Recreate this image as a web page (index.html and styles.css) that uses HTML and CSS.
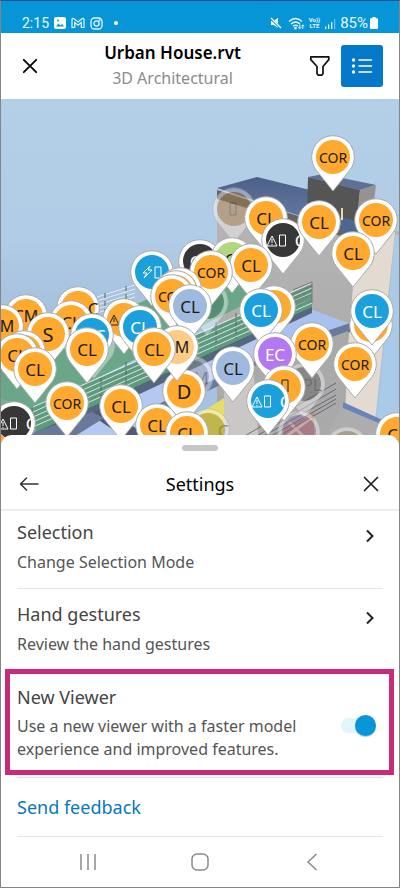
FILE: index.html
```
<!DOCTYPE html>
<html lang="en">
<head>
<meta charset="utf-8">
<meta name="viewport" content="width=device-width, initial-scale=1">
<title>Urban House.rvt</title>
<link rel="stylesheet" href="styles.css">
</head>
<body>
<div class="phone">
  <div class="status">
    <div class="status-group">
      <span class="clock">2:15</span>
      <svg width="12" height="12" viewBox="0 0 12 12"><rect width="12" height="12" rx="2" fill="#fff"/><path d="M2 9.500l2.500-3 2 2L8 7l2.200 2.500z" fill="#0696d7"/><circle cx="4" cy="3.500" r="1" fill="#0696d7"/></svg>
      <svg width="14" height="12" viewBox="0 0 14 12" fill="none" stroke="#e5f5fc" stroke-width="1.200"><path d="M1 10.500V2.200Q1.500.8 3 1.800L7 5l4-3.200q1.500-1 2 .4v8.300h-2.700V5.600L7 8.200 3.700 5.600v4.900z"/></svg>
      <svg width="13" height="13" viewBox="0 0 13 13" fill="none" stroke="#e5f5fc" stroke-width="1.300"><rect x="1" y="1" width="11" height="11" rx="3.500"/><circle cx="6.500" cy="6.500" r="2.600"/><circle cx="9.600" cy="3.400" r=".4"/></svg>
      <span class="dot"></span>
    </div>
    <div class="status-group status-right">
      <svg width="12" height="12" viewBox="0 0 12 12"><path d="M1 4h2.500L8 .8v10L3.500 8H1z" fill="#fff"/><path d="M.5 1l10.500 10.500" stroke="#0696d7" stroke-width="2.400"/><path d="M1 1l10 10" stroke="#fff" stroke-width="1.200"/></svg>
      <svg class="wifi" width="17" height="13" viewBox="0 0 17 13" fill="none" stroke="#e5f5fc" stroke-width="1.300"><path d="M1 4.500q6.500-6 13 0M3 7q4.500-4 9 0M5 9.300q2.500-2.200 5 0"/><circle cx="7.500" cy="11.200" r=".7"/><path d="M11.800 7.500v4m-1.300-1.300 1.300 1.500 1.300-1.500M14.800 12V8m-1.300 1.300 1.300-1.500 1.300 1.500" stroke-width="1"/></svg>
      <span class="volte">Vo))<br>LTE</span>
      <svg width="12" height="11" viewBox="0 0 12 11" fill="#e5f5fc"><path d="M1 8.500h1.300V11H1zM4 6.500h1.300V11H4zM7 4h1.300v7H7z"/><path d="M10 1h1.300v10H10z" opacity=".45"/></svg>
      <span class="battery">85%</span>
      <svg width="8" height="12" viewBox="0 0 8 12"><path d="M2.500 0h3v1.200H7q1 0 1 1V11q0 1-1 1H1q-1 0-1-1V2.200q0-1 1-1h1.500z" fill="#fff"/></svg>
    </div>
  </div>

  <header class="appbar">
    <button class="icon-btn" aria-label="Close"><svg width="16" height="16" viewBox="0 0 16 16" fill="none" stroke="#000" stroke-width="1.800" stroke-linecap="round"><path d="M1.800 1.800l12.400 12.400M14.200 1.800L1.800 14.200"/></svg></button>
    <div class="titles">
      <h1>Urban House.rvt</h1>
      <p>3D Architectural</p>
    </div>
    <div class="actions">
      <button class="filter" aria-label="Filter"><svg width="22" height="22" viewBox="0 0 22 22" fill="none" stroke="#111" stroke-width="1.700" stroke-linejoin="round"><path d="M1.800 1.800h18v2.800L14 11.500v7.200l-1.300 1.500H9.300L8 18.700v-7.200L1.800 4.600z"/></svg></button>
      <button class="list" aria-label="List"><svg width="22" height="18" viewBox="0 0 22 18" stroke="#fff" stroke-width="1.500" stroke-linecap="round"><path d="M8 3h12.500M8 9h12.500M8 15h12.500"/><g fill="#fff" stroke="none"><circle cx="2.500" cy="3" r="1.700"/><circle cx="2.500" cy="9" r="1.700"/><circle cx="2.500" cy="15" r="1.700"/></g></svg></button>
    </div>
  </header>

  <svg class="scene" viewBox="1 99 398 350" preserveAspectRatio="xMidYMid slice" role="img" aria-label="3D model with issue pins">
    <defs>
      <path id="drop" d="M0 34L-16.500 13.500A21.300 21.300 0 1 1 16.500 13.500Z" fill="#fff" stroke="#aaa" stroke-width="1"/>
      <clipPath id="disc"><circle r="17"/></clipPath>
      <g id="warn" fill="none" stroke="#fff" stroke-width="1"><path d="M-16 6l5-10 5 10zM-11-1v4M-11 4v1M-3.500-5h6V6h-6z"/></g>
      <linearGradient id="sky" x1="0" y1="0" x2="0" y2="1"><stop offset="0" stop-color="#b4d0e8"/><stop offset=".4" stop-color="#b0cce6"/><stop offset=".65" stop-color="#a4bedd"/><stop offset="1" stop-color="#a8c4e6"/></linearGradient>
      <linearGradient id="roof" x1="0" y1="0" x2="0" y2="1"><stop offset="0" stop-color="#4d6087"/><stop offset="1" stop-color="#6b81ab"/></linearGradient>
      <linearGradient id="wall" x1="0" y1="0" x2="0" y2="1"><stop offset="0" stop-color="#b6b6b6"/><stop offset="1" stop-color="#a6a6a6"/></linearGradient>
    </defs>
    <rect y="99" width="400" height="350" fill="url(#sky)"/>
    <path d="M217 190L310 203 400 232 365 449H217z" fill="url(#wall)"/>
    <path d="M354 236l41-4-20 190-32-15 10-120z" fill="#e3dbd2"/>
    <path d="M395 235h5v214h-26z" fill="#aacbe8"/>
    <path d="M217 188l40-11 53 13 50 32-6 12z" fill="url(#roof)"/>
    <path d="M217 190l137 44v6L217 199z" fill="#646464"/>
    <path d="M323 221l36-4 10 15-15 5z" fill="#4d6790"/>
    <path d="M308 177l15-3 53 11-16 5z" fill="#5c7098"/>
    <path d="M308 177l52 13-3 31-50-10z" fill="#555"/>
    <path d="M360 190l16-5-4 33-15 3z" fill="#969291"/>
    <path d="M341 208h2v12h-2z" fill="#eed9a5"/>
    <path d="M0 354l110-38 40-18 65-18h30l8 20L30 412 0 400z" fill="#69a788"/>
    <path d="M38 438l274-128 38 14-50 18-70 30-90 52-60 25z" fill="#b5c8f2"/>
    <path d="M285 322l30-11 35 13-50 18-38 10z" fill="#a9c1ee"/>
    <path d="M0 398l33 12 3 24-36-8z" fill="#7dab93"/>
    <path d="M32 408l280-124v25L36 434z" fill="#5e9a7d"/>
    <path d="M36 432l276-125v6L42 440z" fill="#54677c"/>
    <path d="M90 414l14-6 44 28h-26z" fill="#515b6c"/>
    <path d="M300 340l50-17v9l-52 21zM140 412l125-55v7l-117 55zM30 434l62-22 12 6-48 30z" fill="#69799c"/>
    <path d="M225 374l50-14 25-11 48-18-4 118H225z" fill="#a9a9a9"/>
    <path d="M197 415l27-17v42h-40z" fill="#e6dc67"/>
    <path d="M224 385l30-10 5 74h-35z" fill="#c9c8c7"/>
    <path d="M343 405l57 26v18H318z" fill="#adadad"/>
    <path d="M343 402l57 26v4l-57-24z" fill="#6884b8"/>
    <path d="M284 428l30-15v26h-30z" fill="#b5856a"/>
    <path d="M287 436l24-18M289 422l15 15" stroke="#e7cdaa" stroke-width="3"/>
    <path d="M240 446l96-57M244 447l92-52M252 447l84-48M260 447l76-44M236 441l100-58" stroke="#4d4f5a" fill="none" opacity=".7"/>
    <g fill="none" stroke="#edf4f5" stroke-width="1" opacity=".85">
      <path d="M97 297l38-12M97 301l38-12M97 305l38-12M97 309l38-12M97 313l38-12"/>
      <path d="M33 407L312 283M33 412L312 288M33 417L312 293M33 422L312 298M33 427L312 303"/>
    </g>
    <path d="M105 293v20M126 286v20M101 378v25M126 362v25M216 322v25M236 313v25M32 408v24" stroke="#566" stroke-dasharray="5 3"/>
    <path d="M293 290l19-8v21M293 294l19-8M293 298l19-8M293 302l19-8M293 306l19-8" fill="none" stroke="#777"/>

    <g class="pins">
      <g class="faded" transform="translate(234 209)"><use href="#drop"/><circle r="17" fill="#b28345"/><path d="M-4-6h6V6h-6z" fill="none" stroke="#333"/></g>
      <g class="faded" transform="translate(207 302)"><use href="#drop"/><circle r="17" fill="#386b53"/></g>
      <g class="faded" transform="translate(94 345)"><use href="#drop"/></g>
      <g class="faded" transform="translate(192 377)"><use href="#drop"/><circle r="17" fill="#999"/><text x="9">M</text></g>
      <g class="faded" transform="translate(208 430)"><use href="#drop"/><circle r="17" fill="#887f20"/><text x="15">C</text></g>
      <g class="faded" transform="translate(304 384)"><use href="#drop"/><circle r="17" fill="#555"/><text x="8">PL</text></g>
      <g class="faded" transform="translate(299 432)"><use href="#drop"/><circle r="17" fill="#9273ae"/></g>
      <g class="faded" transform="translate(347 448)"><use href="#drop"/><circle r="17" fill="#aa8a55"/></g>

      <g class="orange" transform="translate(266 218)"><use href="#drop"/><circle r="17"/><text>CL</text></g>
      <g class="dark" transform="translate(200 261)"><use href="#drop"/><circle r="17"/><text x="-5">C</text></g>
      <g class="green" transform="translate(232 259)"><use href="#drop"/><circle r="17"/><text x="-2">C</text></g>
      <g class="dark" transform="translate(283 240)"><use href="#drop"/><circle r="17"/><g clip-path="url(#disc)"><use href="#warn"/><text x="17">C</text></g></g>
      <g class="orange" transform="translate(376 220)"><use href="#drop"/><circle r="17"/><text class="small">COR</text></g>
      <g class="orange" transform="translate(319 222)"><use href="#drop"/><circle r="17"/><text>CL</text></g>
      <g class="orange" transform="translate(333 157)"><use href="#drop"/><circle r="17"/><text class="small">COR</text></g>
      <g class="orange" transform="translate(353 253)"><use href="#drop"/><circle r="17"/><text>CL</text></g>
      <g class="blue" transform="translate(152 272)"><use href="#drop"/><circle r="17"/><path d="M-2-6l-7 7h4l-3 5 8-8h-4zM3-5h6V6H3z" fill="none" stroke="#fff"/></g>
      <g class="orange" transform="translate(251 265)"><use href="#drop"/><circle r="17"/><text>CL</text></g>
      <g class="orange" transform="translate(211 272)"><use href="#drop"/><circle r="17"/><text class="small">COR</text></g>

      <g class="orange" transform="translate(78 308)"><use href="#drop"/><circle r="17"/><text x="15">C</text></g>
      <g class="orange" transform="translate(26 316)"><use href="#drop"/><circle r="17"/><text class="medium">CM</text></g>
      <g class="orange" transform="translate(2 326)"><use href="#drop"/><circle r="17"/><text x="5" class="medium">M</text></g>
      <g class="orange" transform="translate(71 322)"><use href="#drop"/><circle r="17"/><text>CL</text></g>
      <g class="orange" transform="translate(48 334)"><use href="#drop"/><circle r="17"/><text class="big">S</text></g>
      <g class="orange" transform="translate(124 320)"><use href="#drop"/><circle r="17"/><path d="M-15 5l5-10 5 10zM-10-2v4" fill="none" stroke="#222"/></g>
      <g class="blue" transform="translate(140 327)"><use href="#drop"/><circle r="17"/><text>CL</text></g>
      <g class="blue" transform="translate(92 335)"><use href="#drop"/><circle r="17"/><text x="8">C</text></g>
      <g class="orange" transform="translate(87 349)"><use href="#drop"/><circle r="17"/><text>CL</text></g>
      <g class="orange" transform="translate(24 352)"><use href="#drop"/><circle r="17"/></g>
      <g class="orange" transform="translate(17 355)"><use href="#drop"/><circle r="17"/><text>CL</text></g>
      <g class="orange" transform="translate(35 369)"><use href="#drop"/><circle r="17"/><text>CL</text></g>

      <g class="orange" transform="translate(180 289)"><use href="#drop"/><circle r="17"/></g>
      <g class="orange" transform="translate(176 292)"><use href="#drop"/><circle r="17"/></g>
      <g class="orange" transform="translate(172 296)"><use href="#drop"/><circle r="17"/><text class="small">COR</text></g>
      <g class="pale-blue" transform="translate(190 306)"><use href="#drop"/><circle r="17"/><text>CL</text></g>
      <g class="orange" transform="translate(184 391)"><use href="#drop"/><circle r="17"/><text class="big">D</text></g>
      <g class="pale-orange" transform="translate(177 347)"><use href="#drop"/><circle r="17"/><text x="5" class="medium">M</text></g>
      <g class="orange" transform="translate(154 349)"><use href="#drop"/><circle r="17"/><text>CL</text></g>
      <g class="orange" transform="translate(121 406)"><use href="#drop"/><circle r="17"/><text>CL</text></g>
      <g class="orange" transform="translate(67 403)"><use href="#drop"/><circle r="17"/><text class="small">COR</text></g>
      <g class="dark" transform="translate(14 423)"><use href="#drop"/><circle r="17"/><g clip-path="url(#disc)"><use href="#warn"/><text x="17">C</text></g></g>
      <g class="orange" transform="translate(157 425)"><use href="#drop"/><circle r="17"/><text>CL</text></g>
      <g class="orange" transform="translate(187 433)"><use href="#drop"/><circle r="17"/><text>CL</text></g>

      <g class="orange" transform="translate(274 307)"><use href="#drop"/><circle r="17"/></g>
      <g class="blue" transform="translate(261 310)"><use href="#drop"/><circle r="17"/><text>CL</text></g>
      <g class="orange" transform="translate(371 325)"><use href="#drop"/><circle r="17"/></g>
      <g class="blue" transform="translate(372 311)"><use href="#drop"/><circle r="17"/><text>CL</text></g>
      <g class="orange" transform="translate(312 344)"><use href="#drop"/><circle r="17"/><text class="small">COR</text></g>
      <g class="orange" transform="translate(355 364)"><use href="#drop"/><circle r="17"/><text class="small">COR</text></g>
      <g class="purple" transform="translate(275 354)"><use href="#drop"/><circle r="17"/><text>EC</text></g>
      <g class="pale-blue" transform="translate(233 368)"><use href="#drop"/><circle r="17"/><text>CL</text></g>
      <g class="orange" transform="translate(284 387)"><use href="#drop"/><circle r="17"/><path d="M-2-7h6V5h-6z" fill="none" stroke="#222"/></g>
      <g class="blue" transform="translate(268 401)"><use href="#drop"/><circle r="17"/><g clip-path="url(#disc)"><use href="#warn"/><text x="17">C</text></g></g>
      <g class="orange" transform="translate(397 434)"><use href="#drop"/><circle r="17"/><text>CL</text></g>
      <path d="M0 435q5 0 5 8H0z" fill="#ffa92e"/>
    </g>
  </svg>

  <main class="sheet">
    <div class="grip"></div>
    <div class="sheet-head">
      <button class="icon-btn" aria-label="Back"><svg width="20" height="16" viewBox="0 0 20 16" fill="none" stroke="#333" stroke-width="1.500" stroke-linecap="round" stroke-linejoin="round"><path d="M19 8H1.500M7.500 2L1.500 8l6 6"/></svg></button>
      <h2>Settings</h2>
      <button class="icon-btn" aria-label="Close settings"><svg width="16" height="16" viewBox="0 0 16 16" fill="none" stroke="#222" stroke-width="1.700" stroke-linecap="round"><path d="M1.500 1.500l13 13M14.500 1.500l-13 13"/></svg></button>
    </div>
    <button class="row row-first">
      <span class="copy"><span class="name">Selection</span><span class="desc">Change Selection Mode</span></span>
      <svg class="chev" width="10" height="14" viewBox="0 0 10 14" fill="none" stroke="#222" stroke-width="2"><path d="M2 1.500L7.500 7 2 12.500"/></svg>
    </button>
    <button class="row">
      <span class="copy"><span class="name">Hand gestures</span><span class="desc">Review the hand gestures</span></span>
      <svg class="chev" width="10" height="14" viewBox="0 0 10 14" fill="none" stroke="#222" stroke-width="2"><path d="M2 1.500L7.500 7 2 12.500"/></svg>
    </button>
    <div class="highlight">
      <label class="copy" for="viewer"><span class="name">New Viewer</span><span class="desc">Use a new viewer with a faster model experience and improved features.</span></label>
      <input class="switch" id="viewer" type="checkbox" role="switch" checked>
    </div>
    <div class="feedback"><a href="#feedback">Send feedback</a></div>
    <nav class="navbar">
      <button class="icon-btn" aria-label="Recent apps"><svg width="18" height="18" viewBox="0 0 18 18" stroke="#8a8a8a" stroke-width="1.500"><path d="M2 1v16M9 1v16M16 1v16"/></svg></button>
      <button class="icon-btn" aria-label="Home"><svg width="18" height="18" viewBox="0 0 18 18" fill="none" stroke="#8a8a8a" stroke-width="1.500"><rect x="1" y="1" width="16" height="16" rx="5"/></svg></button>
      <button class="icon-btn" aria-label="Back"><svg width="12" height="18" viewBox="0 0 12 18" fill="none" stroke="#8a8a8a" stroke-width="1.500"><path d="M10.500 1L2 9l8.500 8"/></svg></button>
    </nav>
  </main>
</div>
</body>
</html>
```
FILE: styles.css
```
* { box-sizing: border-box; }
body { margin: 0; background: #fff; font-family: "Noto Sans", "Open Sans", sans-serif; }
h1, h2, p { margin: 0; }
button { border: 0; padding: 0; background: none; font: inherit; color: inherit; }
svg { display: block; flex: none; }

.phone { min-height: 100vh; display: flex; flex-direction: column; border: 1px solid #858585; border-top-color: #0b5484; }

.status { display: flex; justify-content: space-between; align-items: center; height: 32px; padding: 12px 21px 0 21px; background: #0696d7; color: #eaf7fd; }
.status-group { display: flex; align-items: center; gap: 5px; }
.status-right { gap: 4px; }
.clock, .battery { font-family: Roboto, sans-serif; font-size: 14px; line-height: 16px; }
.battery { font-size: 15px; }
.wifi { margin-left: 2px; }
.status-right svg:last-child { margin-left: -2px; }
.dot { width: 4px; height: 4px; margin-left: 6px; border-radius: 50%; background: #fff; }
.volte { font-family: Roboto, sans-serif; font-size: 6px; line-height: 6px; font-weight: 700; text-align: center; }

.appbar { display: grid; grid-template-columns: 60px 1fr 116px; align-items: center; height: 66px; padding: 0 16px 0 17px; background: #fff; }
.icon-btn { display: grid; place-items: center; width: 24px; height: 24px; }
.titles { text-align: center; white-space: nowrap; }
.titles h1 { font-size: 17px; line-height: 24px; font-weight: 600; color: #000; }
.titles p { font-size: 16px; line-height: 26px; color: #8c8c8c; }
.actions { display: flex; justify-content: flex-end; align-items: center; gap: 10px; }
.list { display: grid; place-items: center; width: 42px; height: 42px; border-radius: 3px; background: #0479c9; }

.scene { width: 100%; height: auto; }
.pins text { font-size: 17px; text-anchor: middle; dominant-baseline: central; fill: #1c1c1c; }
.pins .small { font-size: 14px; }
.pins .medium { font-size: 16px; }
.pins .big { font-size: 20px; }
.faded { opacity: .4; }
.orange circle { fill: #ffa92e; }
.pale-orange circle { fill: #ffcb85; }
.blue circle { fill: #1ba0dc; }
.pale-blue circle { fill: #9fb9df; }
.green circle { fill: #b2d77e; }
.purple circle { fill: #b478f2; }
.dark circle { fill: #373737; }
.pins .blue text, .pins .purple text, .pins .dark text { fill: #fff; }

.sheet { position: relative; flex: 1; display: flex; flex-direction: column; margin-top: -14px; border-radius: 11px 11px 0 0; background: #fff; }
.grip { width: 36px; height: 6px; margin: 10px auto 0; border-radius: 3px; background: #c6c6c6; }
.sheet-head { display: flex; justify-content: space-between; align-items: center; height: 60px; padding: 8px 16px 0 16px; border-bottom: 2px solid #eee; }
.sheet-head h2 { font-size: 18px; line-height: 24px; font-weight: 400; color: #000; }
.row { display: flex; justify-content: space-between; align-items: flex-start; height: 80px; margin: 0 16px; padding: 12px 0 0; text-align: left; }
.row-first { height: 78px; padding-top: 8px; border-bottom: 1px solid #e4e4e4; }
.copy { display: flex; flex-direction: column; gap: 6px; }
.name { font-size: 18px; line-height: 26px; color: #444; }
.desc { font-size: 16px; line-height: 23px; color: #555; }
.chev { margin: 10px 8px 0 0; }
.highlight { display: flex; justify-content: space-between; align-items: center; height: 106px; margin: 0 5px 0 4px; padding: 0 13px 0 7px; border: 5px solid #c92a7b; }
.highlight .copy { width: 290px; gap: 5px; }
.switch { appearance: none; display: flex; justify-content: flex-end; align-items: center; width: 35px; height: 15px; margin: 6px 0 0; border-radius: 8px; background: #e2f4fc; }
.switch::before { content: ""; width: 21px; height: 21px; border-radius: 50%; background: #0696d7; box-shadow: 0 1px 1px #9fc8dd; }
.feedback { display: flex; align-items: center; height: 60px; margin: 2px 16px 0; border-top: 1px solid #e4e4e4; border-bottom: 1px solid #e4e4e4; }
.feedback a { font-size: 18px; line-height: 26px; color: #0578bd; text-decoration: none; }
.navbar { flex: 1; display: flex; justify-content: space-between; align-items: center; padding: 0 75px; }
```
